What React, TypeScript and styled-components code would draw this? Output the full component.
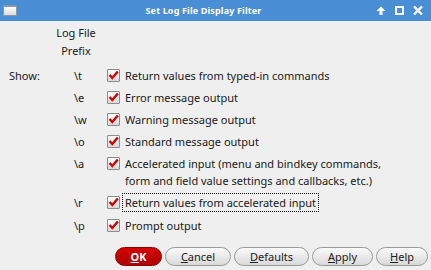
import { Fragment } from "react";
import styled, { createGlobalStyle } from "styled-components";

const GlobalStyle = createGlobalStyle`
	html, body {
		margin: 0;
		padding: 0;
		background: #efefef;
	}
	body {
		font-family: "Noto Sans", "DejaVu Sans", sans-serif;
		font-size: 11px;
		color: #202020;
	}
`;

const Window = styled.div`
	width: 431px;
	height: 270px;
	display: flex;
	flex-direction: column;
	background: #efefef;
	overflow: hidden;
`;

const TitleBar = styled.div`
	height: 21px;
	flex: none;
	background: #4a8ed6;
	display: flex;
	align-items: center;
	padding: 0 8px 0 3px;
`;

const WinIcon = styled.div`
	width: 14px;
	height: 11px;
	box-sizing: border-box;
	border: 1px solid #8a98a8;
	border-top-width: 2px;
	background: linear-gradient(#ffffff, #dcdcdc);
`;

const Title = styled.div`
	flex: 1;
	text-align: center;
	color: #fff;
	font-weight: bold;
	font-size: 9px;
	letter-spacing: 0.15px;
	padding-left: 14px;
`;

const TitleButtons = styled.div`
	display: flex;
	gap: 9px;
	align-items: center;
`;

const Body = styled.div`
	flex: 1;
	display: flex;
	flex-direction: column;
	padding: 3px 3px 0 9px;
`;

const Grid = styled.div`
	display: grid;
	grid-template-columns: 36px 40px 1fr;
	column-gap: 11px;
`;

const HeaderCell = styled.div`
	grid-column: 1 / -1;
	padding-left: 47px;
	line-height: 18px;
	margin-bottom: 4px;
	span {
		display: block;
		width: 40px;
		text-align: center;
		white-space: nowrap;
	}
`;

const Cell = styled.div<{ $indent?: number }>`
	line-height: 17px;
	padding: 2.5px 0 2.5px ${(p) => p.$indent ?? 0}px;
	white-space: nowrap;
`;

const OptionCell = styled.label`
	display: flex;
	align-items: flex-start;
	padding: 2.5px 0;
	white-space: nowrap;
`;

const Box = styled.span`
	flex: none;
	width: 13px;
	height: 13px;
	box-sizing: border-box;
	margin-top: 2px;
	border: 1px solid #8c8c8c;
	border-radius: 1px;
	background: linear-gradient(#ffffff, #d8d8d8);
	display: flex;
	align-items: center;
	justify-content: center;
`;

const Label = styled.span<{ $focused?: boolean }>`
	line-height: 17px;
	margin-left: ${(p) => (p.$focused ? 2 : 5)}px;
	padding: 0 ${(p) => (p.$focused ? 2 : 0)}px;
	border: ${(p) => (p.$focused ? "1px dotted #000" : "none")};
	margin-top: ${(p) => (p.$focused ? -1 : 0)}px;
`;

const ButtonRow = styled.div`
	margin-top: auto;
	display: flex;
	justify-content: flex-end;
	gap: 3px;
	padding-bottom: 4px;
`;

const Button = styled.button<{ $w: number; $primary?: boolean }>`
	width: ${(p) => p.$w}px;
	height: 19px;
	padding: 0;
	border-radius: 10px;
	font-family: "Noto Sans", "DejaVu Sans", sans-serif;
	font-size: 11px;
	line-height: 17px;
	border: 1px solid ${(p) => (p.$primary ? "#8a0000" : "#9a9a9a")};
	background: ${(p) =>
		p.$primary
			? "linear-gradient(#d40000, #b00000)"
			: "linear-gradient(#fbfbfb, #d9d9d9)"};
	color: ${(p) => (p.$primary ? "#fff" : "#202020")};
	font-weight: ${(p) => (p.$primary ? "bold" : "normal")};
	u {
		text-decoration: underline;
	}
`;

function Check() {
	return (
		<Box>
			<svg width="11" height="10" viewBox="0 0 11 10">
				<path d="M1.5 5 L4.3 8 L9.8 1.5" fill="none" stroke="#d40000" strokeWidth="2.4" />
			</svg>
		</Box>
	);
}

const options = [
	{ prefix: "\\t", text: ["Return values from typed-in commands"] },
	{ prefix: "\\e", text: ["Error message output"] },
	{ prefix: "\\w", text: ["Warning message output"] },
	{ prefix: "\\o", text: ["Standard message output"] },
	{
		prefix: "\\a",
		text: [
			"Accelerated input (menu and bindkey commands,",
			"form and field value settings and callbacks, etc.)",
		],
	},
	{ prefix: "\\r", text: ["Return values from accelerated input"], focused: true },
	{ prefix: "\\p", text: ["Prompt output"] },
];

export default function App() {
	return (
		<Window>
			<GlobalStyle />
			<TitleBar>
				<WinIcon />
				<Title>Set Log File Display Filter</Title>
				<TitleButtons>
					<svg width="10" height="9" viewBox="0 0 10 9">
						<path d="M5 0.5 L9.5 5 L6.5 5 L6.5 9 L3.5 9 L3.5 5 L0.5 5 Z" fill="#fff" />
					</svg>
					<svg width="9" height="9" viewBox="0 0 9 9">
						<rect x="1" y="1" width="7" height="7" fill="none" stroke="#fff" strokeWidth="2" />
					</svg>
					<svg width="10" height="9" viewBox="0 0 10 9">
						<path d="M1 0.5 L9 8.5 M9 0.5 L1 8.5" stroke="#fff" strokeWidth="2.4" />
					</svg>
				</TitleButtons>
			</TitleBar>
			<Body>
				<Grid>
					<HeaderCell>
						<span>Log File</span>
						<span>Prefix</span>
					</HeaderCell>
					{options.map((o, i) => (
						<Fragment key={i}>
							<Cell>{i === 0 ? "Show:" : ""}</Cell>
							<Cell $indent={18}>{o.prefix}</Cell>
							<OptionCell>
								<Check />
								<Label $focused={o.focused}>
									{o.text.map((t, j) => (
										<div key={j}>{t}</div>
									))}
								</Label>
							</OptionCell>
						</Fragment>
					))}
				</Grid>
				<ButtonRow>
					<Button $w={47} $primary>
						<u>O</u>K
					</Button>
					<Button $w={66}>
						<u>C</u>ancel
					</Button>
					<Button $w={75}>
						<u>D</u>efaults
					</Button>
					<Button $w={61}>
						<u>A</u>pply
					</Button>
					<Button $w={52}>
						<u>H</u>elp
					</Button>
				</ButtonRow>
			</Body>
		</Window>
	);
}
